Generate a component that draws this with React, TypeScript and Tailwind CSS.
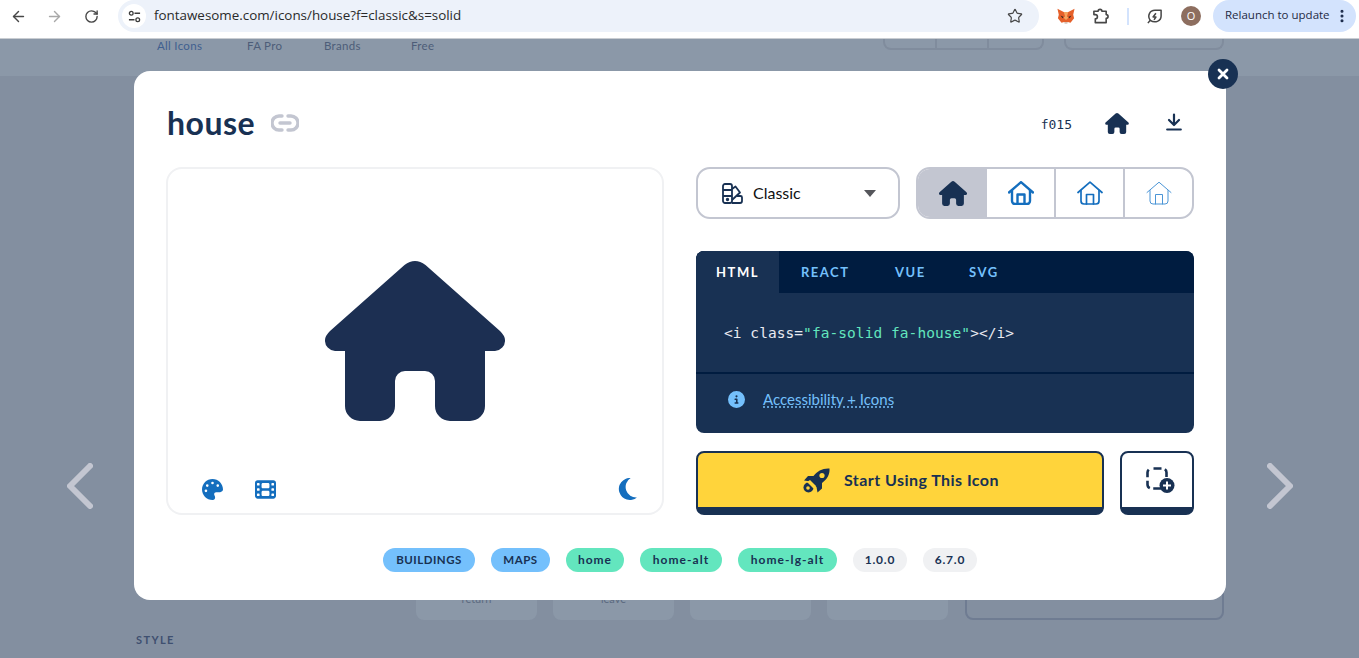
import React from "react";
import { ArrowLeft, ArrowRight, RotateCw, Star, EllipsisVertical } from "lucide-react";
import { FaFilm, FaPalette, FaCircleInfo } from "react-icons/fa6";

const HOUSE =
  "M79.5 4 Q90 -4 100.5 4 L175 70 Q180 75 180 79 A10.5 10.5 0 0 1 170 90 L160 90 L160 145 A15 15 0 0 1 145 160 L125 160 A15 15 0 0 1 110 145 L110 120 A10 10 0 0 0 100 110 L80 110 A10 10 0 0 0 70 120 L70 145 A15 15 0 0 1 55 160 L35 160 A15 15 0 0 1 20 145 L20 90 L10 90 A10.5 10.5 0 0 1 0 79 Q0 75 5 70 Z";

const SolidHouse = ({ className }: { className: string }) => (
  <svg viewBox="0 0 180 160" className={className} fill="currentColor">
    <path d={HOUSE} />
  </svg>
);

// regular / light / thin all share one outline, only the stroke changes
const OutlineHouse = ({ sw, color }: { sw: number; color: string }) => (
  <svg viewBox="0 0 26 24" className="w-[26px] h-[24px]" fill="none" stroke={color} strokeWidth={sw} strokeLinecap="round" strokeLinejoin="round">
    <path d="M1 11.5 L13 1.2 L25 11.5" />
    <path d="M4 9.5 V20 A3 3 0 0 0 7 23 H19 A3 3 0 0 0 22 20 V9.5" />
    <path d="M9.5 23 V13.5 H16.5 V23" />
  </svg>
);

const Fox = () => (
  <svg viewBox="0 0 20 18" className="w-[18px] h-[17px]">
    <path d="M0.5 0.5 L7.5 4 H12.5 L19.5 0.5 L18 7 L19 11 L15 16 L12 15 H8 L5 16 L1 11 L2 7 Z" fill="#e5602a" />
    <path d="M7.5 4 H12.5 L11 9 L13 10 L10 13 L7 10 L9 9 Z" fill="#f6a55f" />
    <path d="M4 8 L7.5 9.5 L6 11 Z M16 8 L12.5 9.5 L14 11 Z" fill="#3a2a20" />
    <path d="M8 15 H12 L11.5 17 H8.5 Z" fill="#d7c1b3" />
  </svg>
);

const LinkIcon = () => (
  <svg viewBox="0 0 28 18" className="w-[28px] h-[18px]" fill="none" stroke="#c3c6d1" strokeWidth="3.4" strokeLinecap="round">
    <path d="M11 2 H8 A7 7 0 0 0 8 16 H11" />
    <path d="M17 2 H20 A7 7 0 0 1 20 16 H17" />
    <path d="M9 9 H19" />
  </svg>
);

const DownloadIcon = () => (
  <svg viewBox="0 0 16 18" className="w-4 h-[18px]" fill="none" stroke="#183153" strokeWidth="2.2" strokeLinecap="round" strokeLinejoin="round">
    <path d="M8 1.500 V11 M3 7 L8 12 L13 7" />
    <path d="M1.200 16.500 H14.800" />
  </svg>
);

const MoonIcon = () => (
  <svg viewBox="0 0 18 21" className="w-[19px] h-[22px]" fill="currentColor">
    <path d="M12 0 A10.500 10.500 0 1 0 18 18.500 A10 10 0 0 1 12 0 Z" />
  </svg>
);

const SwatchIcon = () => (
  <svg viewBox="0 0 21 21" className="w-[21px] h-[21px]" fill="none" stroke="#183153" strokeWidth="1.800" strokeLinejoin="round">
    <rect x="1" y="1" width="9" height="19" rx="2" />
    <path d="M1 7 H10 M1 13 H10" />
    <path d="M10 6 L13.500 3.500 L18 9.500 L10 17" />
    <path d="M10 20 H18 A2 2 0 0 0 20 18 V14.500 A1.500 1.500 0 0 0 18.500 13 H15" />
    <circle cx="5.500" cy="16.500" r="0.800" fill="#183153" />
  </svg>
);

const RocketIcon = () => (
  <svg viewBox="0 0 27 25" className="w-[27px] h-[25px]">
    <path d="M26.500 0.500 C20 0 14 3 10.500 8 H5 L1 12.500 L7.500 13.500 L13.500 19 L14.500 24.500 L19 20.500 V15 C24 11.500 27 6.500 26.500 0.500 Z" fill="#183153" />
    <circle cx="19" cy="7.500" r="2.600" fill="#ffd43b" />
    <circle cx="5.500" cy="19.500" r="5" fill="#183153" />
    <circle cx="5" cy="20" r="1.800" fill="#ffd43b" />
    <path d="M7 12 L13 18 L10.500 20.500 L4 14 Z" fill="#ffd43b" />
  </svg>
);

const Pill = ({ label, className }: { label: string; className: string }) => (
  <span className={`h-6 rounded-full flex items-center justify-center font-bold text-[#183153] ${className}`}>{label}</span>
);

const Chevron = ({ d }: { d: string }) => (
  <svg viewBox="0 0 26 46" className="w-[26px] h-[46px]" fill="none" stroke="#c3c6d1" strokeWidth="6" strokeLinecap="round" strokeLinejoin="round">
    <path d={d} />
  </svg>
);

function BrowserBar() {
  return (
    <div className="h-[39px] bg-white border-b border-[#c9cdd2] flex items-start pl-[10px] pr-[3px] text-[#474747] font-['Open_Sans',sans-serif]">
      <div className="flex items-center gap-[17px] h-8 w-[108px]">
        <ArrowLeft size={17} strokeWidth={2} />
        <ArrowRight size={17} strokeWidth={2} className="text-[#a8a8a8] ml-[2px]" />
        <RotateCw size={15} strokeWidth={2.2} className="ml-[4px]" />
      </div>
      <div className="h-8 w-[921px] bg-[#edf2fa] rounded-full flex items-center pl-1 pr-[16px]">
        <div className="w-6 h-6 rounded-full bg-white flex items-center justify-center">
          <svg viewBox="0 0 14 14" className="w-[13px] h-[13px]" fill="none" stroke="#3c3c3c" strokeWidth="1.4">
            <circle cx="3.5" cy="3.5" r="2" />
            <path d="M7 3.5 H13 M1 10.5 H7" />
            <circle cx="10.5" cy="10.5" r="2" />
          </svg>
        </div>
        <span className="ml-2 text-[13.4px] text-[#2a2a2a] flex-1 pb-[2px]">fontawesome.com/icons/house?f=classic&amp;s=solid</span>
        <Star size={16} strokeWidth={1.8} />
      </div>
      <div className="flex items-center h-8 ml-[18px]">
        <Fox />
        <svg viewBox="0 0 18 18" className="w-[17px] h-[17px] ml-[17px]" fill="none" stroke="#474747" strokeWidth="1.7" strokeLinejoin="round">
          <path d="M2 3.5 H6.5 A2 2 0 0 1 10.5 3.5 H15 V7 A2 2 0 0 1 15 11 V15.5 H3.5 V11.5 A2.2 2.2 0 0 0 3.5 7 H2 Z" />
        </svg>
        <span className="w-[2px] h-[17px] bg-[#d3e3fd] ml-[18px]" />
        <svg viewBox="0 0 18 18" className="w-[17px] h-[17px] ml-[17px]" fill="none" stroke="#474747" strokeWidth="1.6" strokeLinejoin="round">
          <path d="M2 16 L4.5 13 C1 8 4 2.5 9.5 2.5 H16 V8.5 C16 14 9.5 16.5 4.5 13" />
          <path d="M10.5 5.5 L7.5 9.5 H10.5 L8.5 12.5" />
        </svg>
        <span className="w-5 h-5 rounded-full bg-[#8d6e5f] text-white text-[11px] flex items-center justify-center ml-[18px]">O</span>
      </div>
      <div className="h-8 w-[143px] ml-[12px] rounded-full bg-[#d3e3fd] flex items-center pl-3 text-[#1f2a44]">
        <span className="text-[11.5px] whitespace-nowrap pb-[2px]">Relaunch to update</span>
        <EllipsisVertical size={16} strokeWidth={2.6} className="ml-[4px] text-[#1b2a4a]" />
      </div>
    </div>
  );
}

function Backdrop() {
  return (
    <>
      <div className="h-[37px] bg-[#8b98a8] flex text-[11.5px] leading-[14px] text-[#4d5d78] font-['Lato',sans-serif] tracking-[0.3px]">
        <div className="flex pl-[157px] h-[14px]">
          <span className="w-[90px] text-[#3f5f8f]">All Icons</span>
          <span className="w-[77px]">FA Pro</span>
          <span className="w-[87px]">Brands</span>
          <span>Free</span>
        </div>
        <div className="flex ml-[449px]">
          <div className="w-[161px] h-[11px] border-2 border-t-0 border-[#808c9d] rounded-b-lg flex">
            <span className="w-[52px] border-r-2 border-[#808c9d]" />
            <span className="w-[52px] border-r-2 border-[#808c9d]" />
          </div>
          <div className="w-[160px] h-[11px] ml-[20px] border-2 border-t-0 border-[#808c9d] rounded-b-lg" />
        </div>
      </div>
      <div className="h-[582px] bg-[#838fa0] pt-[484px]">
        <div className="flex gap-4 pl-[416px] h-[60px] text-[11px] text-[#5b6a80] font-['Lato',sans-serif]">
          <div className="w-[121px] bg-[#8b98a8] rounded-lg pt-[31px] text-center">return</div>
          <div className="w-[121px] bg-[#8b98a8] rounded-lg pt-[31px] text-center">leave</div>
          <div className="w-[121px] bg-[#8b98a8] rounded-lg" />
          <div className="w-[121px] bg-[#8b98a8] rounded-lg" />
          <div className="w-[259px] ml-[1px] border-2 border-[#6f7c92] rounded-lg" />
        </div>
        <p className="mt-[12px] pl-[136px] text-[11px] font-bold tracking-[1.4px] text-[#3f5070] font-['Lato',sans-serif]">STYLE</p>
      </div>
    </>
  );
}

function CodeBox() {
  return (
    <div className="h-[182px] rounded-lg bg-[#183153] overflow-hidden">
      <div className="h-[42px] bg-[#001c40] flex items-center text-[13px] font-bold tracking-[1.5px] text-[#74c0fc]">
        <span className="w-[83px] h-full bg-[#183153] text-white flex items-center justify-center pt-[2px]">HTML</span>
        <span className="ml-[22px] w-[94px] pt-[2px]">REACT</span>
        <span className="w-[74px] pt-[2px]">VUE</span>
        <span className="pt-[2px]">SVG</span>
      </div>
      <div className="h-[81px] border-b-2 border-[#001c40] pl-7 pt-[31px] text-[14.5px] leading-[18px] text-[#e8eaf0] font-['DejaVu_Sans_Mono',monospace] tracking-[0.06px]">
        &lt;i class=<span className="text-[#63e6be]">"fa-solid fa-house"</span>&gt;&lt;/i&gt;
      </div>
      <div className="flex items-center pl-8 pt-[14px]">
        <FaCircleInfo size={17} className="text-[#74c0fc]" />
        <span className="ml-[18px] text-[15px] text-[#74c0fc] underline decoration-dotted underline-offset-2">Accessibility + Icons</span>
      </div>
    </div>
  );
}

function Modal() {
  return (
    <div className="absolute left-[134px] top-[71px] w-[1092px] h-[529px] bg-white rounded-2xl px-8 font-['Lato',sans-serif] text-[#183153]">
      <div className="h-[96px] flex items-center pt-[8px]">
        <h1 className="text-[32px] font-bold leading-none tracking-[0.5px] pl-[1px]">house</h1>
        <span className="ml-4">
          <LinkIcon />
        </span>
        <span className="ml-auto text-[13px] font-['DejaVu_Sans_Mono',monospace] pt-[3px]">f015</span>
        <SolidHouse className="w-6 h-[21px] ml-[33px]" />
        <span className="ml-[37px] mr-[12px] mb-[2px]">
          <DownloadIcon />
        </span>
      </div>

      <div className="flex gap-8">
        <div className="w-[498px] h-[348px] border-2 border-[#f0f1f3] rounded-2xl flex flex-col text-[#146ebe]">
          <div className="flex-1 flex justify-center pt-[92px]">
            <SolidHouse className="w-[180px] h-[160px] text-[#1c2f52]" />
          </div>
          <div className="flex items-center pl-[34px] pr-[25px] pb-[13px]">
            <FaPalette size={21} />
            <FaFilm size={21} className="ml-[32px]" />
            <span className="ml-auto">
              <MoonIcon />
            </span>
          </div>
        </div>

        <div className="w-[498px] flex flex-col">
          <div className="flex gap-4 h-[52px]">
            <div className="w-[204px] border-2 border-[#c3c6d1] rounded-[14px] flex items-center pl-[24px] pr-[22px]">
              <SwatchIcon />
              <span className="ml-[10px] text-[16px] text-[#111]">Classic</span>
              <span className="ml-auto w-0 h-0 border-x-[6px] border-x-transparent border-t-[7px] border-t-[#55565b]" />
            </div>
            <div className="w-[278px] border-2 border-[#c3c6d1] rounded-[14px] overflow-hidden flex">
              <div className="w-[69px] bg-[#c3c6d1] flex items-center justify-center">
                <SolidHouse className="w-[28px] h-[25px]" />
              </div>
              <div className="w-[69px] border-r-2 border-[#c3c6d1] flex items-center justify-center">
                <OutlineHouse sw={2.4} color="#146ebe" />
              </div>
              <div className="w-[69px] border-r-2 border-[#c3c6d1] flex items-center justify-center">
                <OutlineHouse sw={1.7} color="#146ebe" />
              </div>
              <div className="flex-1 flex items-center justify-center">
                <OutlineHouse sw={1} color="#4b95d6" />
              </div>
            </div>
          </div>

          <div className="mt-8">
            <CodeBox />
          </div>

          <div className="flex gap-4 mt-[18px] h-[64px]">
            <div className="w-[408px] bg-[#ffd43b] border-2 border-b-[8px] border-[#183153] rounded-lg flex items-center justify-center gap-[14px] pl-[2px]">
              <RocketIcon />
              <span className="text-[16px] font-bold tracking-[0.45px]">Start Using This Icon</span>
            </div>
            <div className="w-[74px] bg-white border-2 border-b-[8px] border-[#183153] rounded-lg flex items-center justify-center">
              <svg viewBox="0 0 29 27" className="w-[29px] h-[27px] ml-[6px] mt-[1px]" fill="none" stroke="#183153" strokeWidth="2.600">
                <rect x="1.500" y="1.500" width="19" height="20" rx="4" strokeDasharray="8 3.500" strokeDashoffset="-2" />
                <circle cx="21" cy="18.500" r="7.500" fill="#183153" stroke="none" />
                <path d="M21 14.500 V22.500 M17 18.500 H25" stroke="#fff" strokeWidth="2" />
              </svg>
            </div>
          </div>
        </div>
      </div>

      <div className="flex gap-4 mt-[33px] pl-[217px]">
        <Pill label="BUILDINGS" className="w-[92px] bg-[#74c0fc] text-[11.5px] tracking-[0.5px]" />
        <Pill label="MAPS" className="w-[59px] bg-[#74c0fc] text-[11.5px] tracking-[0.5px]" />
        <Pill label="home" className="w-[58px] bg-[#63e6be] text-[12px] tracking-[0.95px]" />
        <Pill label="home-alt" className="w-[82px] bg-[#63e6be] text-[12px] tracking-[1.05px]" />
        <Pill label="home-lg-alt" className="w-[99px] bg-[#63e6be] text-[12px] tracking-[1.05px]" />
        <Pill label="1.0.0" className="w-[54px] bg-[#f0f1f3] text-[12px] tracking-[0.8px]" />
        <Pill label="6.7.0" className="w-[54px] bg-[#f0f1f3] text-[12px] tracking-[0.8px]" />
      </div>

      <button className="absolute -right-[12px] -top-[12px] w-[30px] h-[30px] rounded-full bg-[#183153] flex items-center justify-center">
        <svg viewBox="0 0 12 12" className="w-3 h-3" fill="none" stroke="#fff" strokeWidth="2.800" strokeLinecap="round">
          <path d="M2 2 L10 10 M10 2 L2 10" />
        </svg>
      </button>
    </div>
  );
}

export default function App() {
  return (
    <div className="relative w-[1359px] h-[658px] overflow-hidden">
      <BrowserBar />
      <Backdrop />
      <div className="absolute left-[67px] top-[463px]">
        <Chevron d="M23 3 L3 23 L23 43" />
      </div>
      <div className="absolute left-[1267px] top-[463px]">
        <Chevron d="M3 3 L23 23 L3 43" />
      </div>
      <Modal />
    </div>
  );
}
